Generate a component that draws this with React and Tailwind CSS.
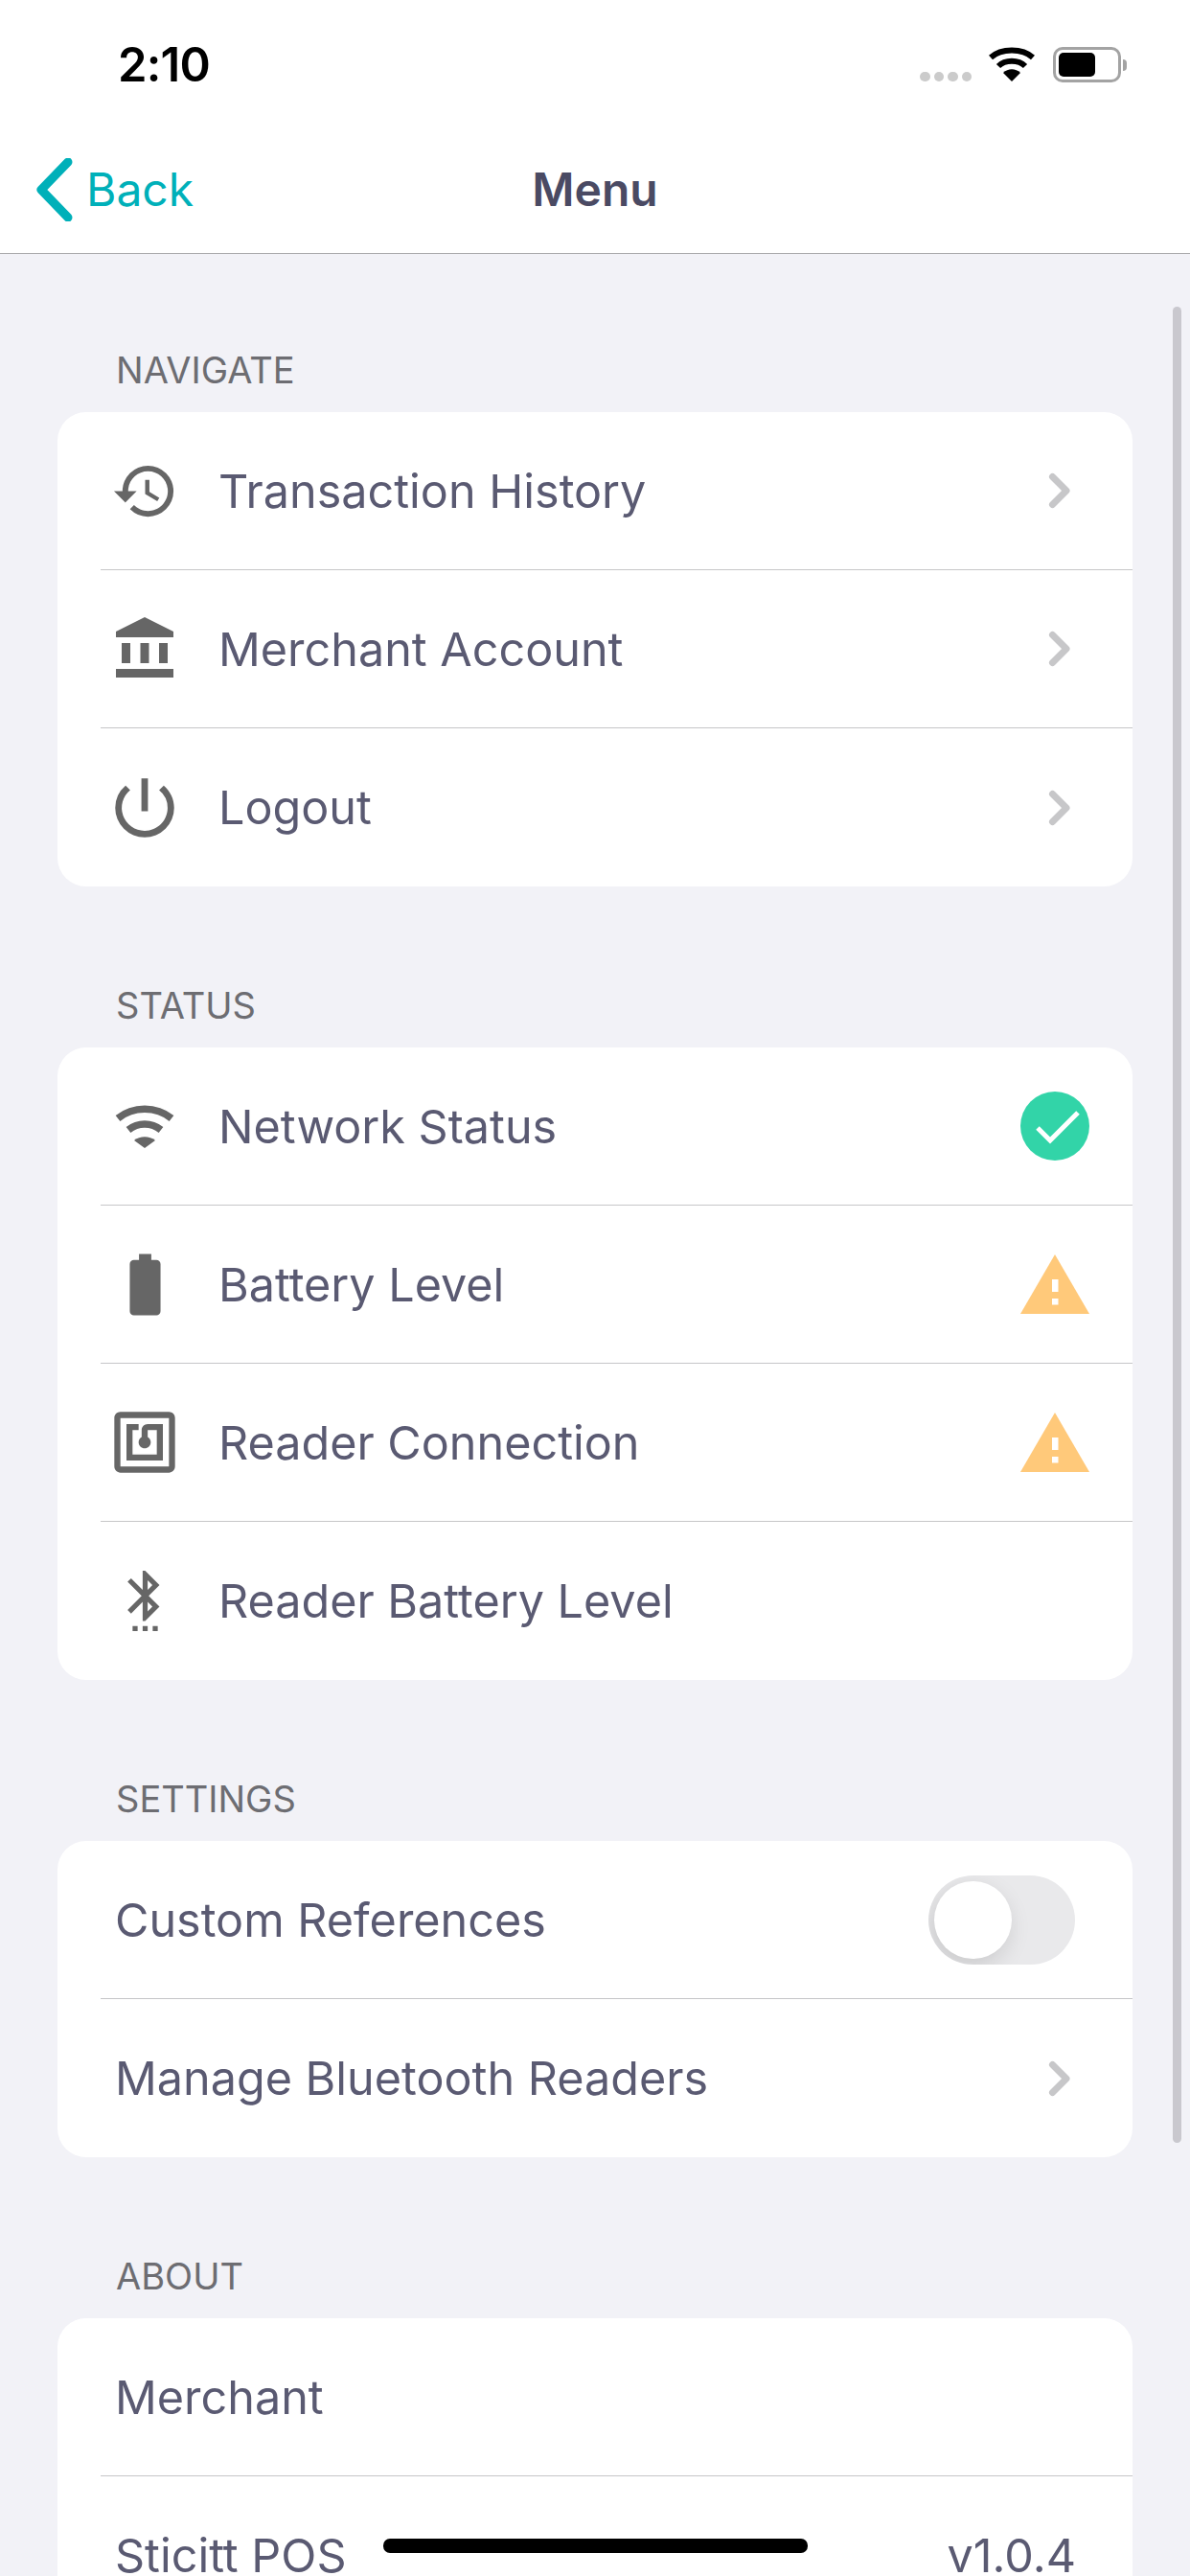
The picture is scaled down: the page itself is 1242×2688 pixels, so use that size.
import React from 'react';
import { MdHistory, MdAccountBalance, MdPowerSettingsNew, MdNfc, MdSettingsBluetooth, MdBatteryStd } from 'react-icons/md';

const Chevron = () => (
  <svg width="30" height="44" viewBox="0 0 30 44" fill="none" className="shrink-0">
    <path d="M6.500 7.500L21 22L6.500 36.500" stroke="#c7c7c9" strokeWidth="7" strokeLinecap="round" strokeLinejoin="round" />
  </svg>
);

const Check = () => (
  <svg width="72" height="72" viewBox="0 0 72 72" className="shrink-0">
    <circle cx="36" cy="36" r="36" fill="#32d4a8" />
    <path d="M18 38l13 13 29-29" fill="none" stroke="#fff" strokeWidth="5" />
  </svg>
);

const Warning = () => (
  <svg width="72" height="62" viewBox="0 0 72 62" className="shrink-0">
    <path d="M36 0l36 62H0z" fill="#ffc97a" />
    <path d="M33 26h6.500v13H33zM33 46h6.500v6.500H33z" fill="#fff" />
  </svg>
);

const WifiIcon = () => (
  <svg width="62" height="46" viewBox="0 0 62 46" fill="none">
    <path d="M3 15C19 2 43 2 59 15" stroke="#666" strokeWidth="7.500" />
    <path d="M14 27C24 19 38 19 48 27" stroke="#666" strokeWidth="7.500" />
    <path d="M31 46L20 38C26 33 36 33 42 38z" fill="#666" />
  </svg>
);

const iconCls = 'shrink-0 text-[#666]';

const Row = ({ icon, label, right, last }) => (
  <div className={`ml-[45px] h-[165px] flex items-center justify-between ${last ? '' : 'border-b border-[#c6c6c8]'}`}>
    <div className="flex items-center pl-[15px]">
      {icon && <div className="w-[62px] mr-[46px] flex justify-center">{icon}</div>}
      <span className="pt-[2px] text-[48.500px] text-[#5a5a72] leading-none">{label}</span>
    </div>
    {right}
  </div>
);

const Section = ({ title, first, children }) => (
  <section className={first ? 'pt-[87px]' : 'pt-[90px]'}>
    <div className="h-[68px] mb-[10px] pl-[121px] flex items-center text-[38px] text-[#6d6d72]">{title}</div>
    <div className="mx-[60px] bg-white rounded-[30px] overflow-hidden">{children}</div>
  </section>
);

const chevronSlot = <div className="pr-[60px]"><Chevron /></div>;
const statusSlot = (icon) => <div className="pr-[45px]">{icon}</div>;

const App = () => (
  <div className="relative w-[1242px] h-[2688px] overflow-hidden bg-[#f2f2f7] font-['Inter',sans-serif]">
    <header className="bg-white border-b border-[#a9a9ab] h-[265px]">
      <div className="h-[132px] relative flex items-start justify-between pl-[123px] pr-[72px]">
        <span className="mt-[44px] text-[49px] leading-[48px] font-semibold text-black tracking-[-0.8px]">2:10</span>
        <div className="mt-[49px] flex items-end">
          <div className="flex gap-[4px] mb-[1px]">
            <span className="w-[10.500px] h-[10px] rounded-full bg-[#cbcbcb]" />
            <span className="w-[10.500px] h-[10px] rounded-full bg-[#cbcbcb]" />
            <span className="w-[10.500px] h-[10px] rounded-full bg-[#cbcbcb]" />
            <span className="w-[10.500px] h-[10px] rounded-full bg-[#cbcbcb]" />
          </div>
          <svg width="48" height="36" viewBox="0 0 48 36" className="ml-[18px] mb-[1px]" fill="none">
            <path d="M2 11C13 1 35 1 46 11" stroke="#000" strokeWidth="6" />
            <path d="M10 20C17 13 31 13 38 20" stroke="#000" strokeWidth="6" />
            <path d="M24 36L15 27C20 22 28 22 33 27z" fill="#000" />
          </svg>
          <div className="ml-[19px] relative w-[71px] h-[37px] rounded-[10px] border-[3px] border-[#a3a3a3] p-[3px]">
            <div className="w-[38px] h-full bg-black rounded-[5px]" />
            <span className="absolute right-[-9px] top-[10px] w-[4px] h-[12px] rounded-r-full bg-[#a3a3a3]" />
          </div>
        </div>
      </div>
      <nav className="h-[132px] grid grid-cols-3 items-center">
        <div className="flex items-center pl-[38px]">
          <svg width="40" height="66" viewBox="0 0 40 66" fill="none" className="shrink-0">
            <path d="M33 4L5 33l28 29" stroke="#00b0b9" strokeWidth="9" strokeLinecap="round" strokeLinejoin="round" />
          </svg>
          <span className="ml-[12px] text-[48px] text-[#00b0b9] leading-none">Back</span>
        </div>
        <div className="text-center text-[48px] font-semibold text-[#4a4a63] leading-none">Menu</div>
      </nav>
    </header>

    <main>
      <Section title="NAVIGATE" first>
        <Row icon={<MdHistory size={71} className={iconCls} />} label="Transaction History" right={chevronSlot} />
        <Row icon={<MdAccountBalance size={72} className={iconCls} />} label="Merchant Account" right={chevronSlot} />
        <Row icon={<MdPowerSettingsNew size={82} className={iconCls} />} label="Logout" right={chevronSlot} last />
      </Section>

      <Section title="STATUS">
        <Row icon={<WifiIcon />} label="Network Status" right={statusSlot(<Check />)} />
        <Row icon={<MdBatteryStd size={77} className={iconCls} />} label="Battery Level" right={statusSlot(<Warning />)} />
        <Row icon={<MdNfc size={76} className={iconCls} />} label="Reader Connection" right={statusSlot(<Warning />)} />
        <Row icon={<MdSettingsBluetooth size={63} className={iconCls} />} label="Reader Battery Level" last />
      </Section>

      <Section title="SETTINGS">
        <Row
          label="Custom References"
          right={
            <div className="mr-[60px] w-[153px] h-[93px] rounded-full bg-[#e9e9eb] p-[6px] overflow-hidden">
              <div className="w-[81px] h-[81px] rounded-full bg-white shadow-[-4px_8px_24px_rgba(0,0,0,0.14)]" />
            </div>
          }
        />
        <Row label="Manage Bluetooth Readers" right={chevronSlot} last />
      </Section>

      <Section title="ABOUT">
        <Row label="Merchant" />
        <Row label="Sticitt POS" right={<span className="pr-[59px] pt-[2px] text-[48.500px] text-[#5a5a72] leading-none">v1.0.4</span>} last />
      </Section>
    </main>

    {/* scroll indicator + home bar sit over the list */}
    <div className="absolute left-[1224px] top-[320px] w-[9px] h-[1916px] rounded-full bg-[#c9c8ce]" />
    <div className="absolute left-[400px] top-[2649px] w-[443px] h-[15px] rounded-[7px] bg-black" />
  </div>
);

export default App;
